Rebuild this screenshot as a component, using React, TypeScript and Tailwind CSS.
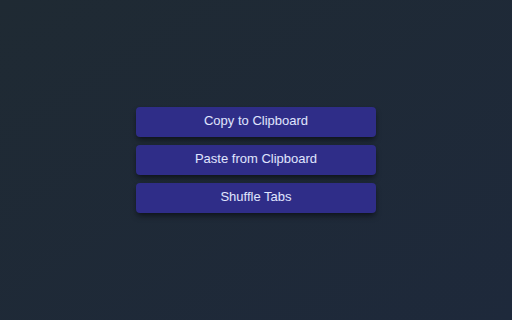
export default function App() {
  const actions = ["Copy to Clipboard", "Paste from Clipboard", "Shuffle Tabs"];

  return (
    <div
      className="flex h-[320px] w-[512px] items-center justify-center bg-gradient-to-br from-[#1f2a33] to-[#1e293b]"
      style={{ fontFamily: '"Liberation Sans", Arial, sans-serif' }}
    >
      <div className="-mt-px flex w-60 flex-col gap-2">
        {actions.map((label) => (
          <button
            key={label}
            className="h-[30px] rounded-sm bg-[#2f2d88] pb-px text-[13px] text-indigo-100 shadow-md shadow-black/40"
          >
            {label}
          </button>
        ))}
      </div>
    </div>
  );
}
